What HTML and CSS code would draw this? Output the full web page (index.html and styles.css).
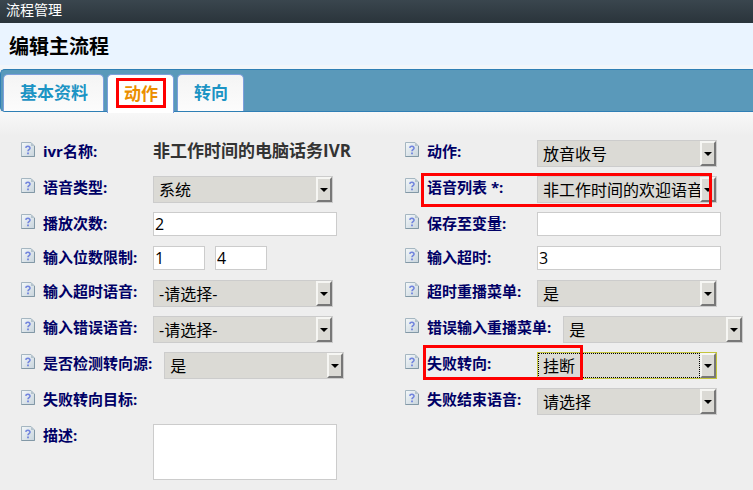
FILE: index.html
```html
<!DOCTYPE html>
<html lang="zh-CN">
<head>
  <meta charset="UTF-8" />
  <meta name="viewport" content="width=device-width, initial-scale=1.0"/>
  <title>流程管理</title>
  <link rel="stylesheet" href="styles.css">
</head>
<body>
  <svg class="defs" aria-hidden="true">
    <defs>
      <linearGradient id="paper" x1="0" y1="0" x2="1" y2="1">
        <stop offset="0" stop-color="#f4f8fa"/>
        <stop offset="1" stop-color="#c8d4dc"/>
      </linearGradient>
    </defs>
    <symbol id="help" viewBox="0 0 14 15">
      <path d="M.5.5H10L13.500 4V14.500H.5z" fill="url(#paper)" stroke="#a5b6c1"/>
      <path d="M13.500 4V14.500H.5" fill="none" stroke="#8298a6"/>
      <path d="M10 .5V4H13.500z" fill="#b4c3cd"/>
      <path d="M4.800 5.800C5 3.700 9.200 3.800 9 6.200C8.900 7.700 7 7.600 7 9.300" fill="none" stroke="#7184dd" stroke-width="1.600"/>
      <path d="M6.100 10.500H7.900V12.200H6.100z" fill="#7184dd"/>
    </symbol>
  </svg>

  <header class="topbar">流程管理</header>
  <h1 class="title">编辑主流程</h1>

  <nav class="tabs">
    <button type="button" class="tab">基本资料</button>
    <button type="button" class="tab active">动作<span class="mark mark-tab"></span></button>
    <button type="button" class="tab">转向</button>
  </nav>

  <form class="form">
    <div class="field">
      <svg class="help"><use href="#help"/></svg>
      <span class="label">ivr名称:</span>
      <strong class="value">非工作时间的电脑话务IVR</strong>
    </div>
    <div class="field">
      <svg class="help"><use href="#help"/></svg>
      <label class="label" for="action">动作:</label>
      <span class="select"><select id="action"><option>放音收号</option></select></span>
    </div>

    <div class="field">
      <svg class="help"><use href="#help"/></svg>
      <label class="label" for="voiceType">语音类型:</label>
      <span class="select"><select id="voiceType"><option>系统</option></select></span>
    </div>
    <div class="field">
      <svg class="help"><use href="#help"/></svg>
      <label class="label" for="voiceList">语音列表 *:</label>
      <span class="select"><select id="voiceList"><option>非工作时间的欢迎语音</option></select></span>
      <span class="mark mark-voice"></span>
    </div>

    <div class="field">
      <svg class="help"><use href="#help"/></svg>
      <label class="label" for="playTimes">播放次数:</label>
      <input type="text" id="playTimes" value="2">
    </div>
    <div class="field">
      <svg class="help"><use href="#help"/></svg>
      <label class="label" for="saveVar">保存至变量:</label>
      <input type="text" id="saveVar">
    </div>

    <div class="field">
      <svg class="help"><use href="#help"/></svg>
      <label class="label" for="minDigits">输入位数限制:</label>
      <input type="text" id="minDigits" class="short" value="1">
      <input type="text" class="short" aria-label="最大位数" value="4">
    </div>
    <div class="field">
      <svg class="help"><use href="#help"/></svg>
      <label class="label" for="timeout">输入超时:</label>
      <input type="text" id="timeout" value="3">
    </div>

    <div class="field">
      <svg class="help"><use href="#help"/></svg>
      <label class="label" for="timeoutVoice">输入超时语音:</label>
      <span class="select"><select id="timeoutVoice"><option>-请选择-</option></select></span>
    </div>
    <div class="field">
      <svg class="help"><use href="#help"/></svg>
      <label class="label" for="timeoutReplay">超时重播菜单:</label>
      <span class="select"><select id="timeoutReplay"><option>是</option></select></span>
    </div>

    <div class="field">
      <svg class="help"><use href="#help"/></svg>
      <label class="label" for="errorVoice">输入错误语音:</label>
      <span class="select"><select id="errorVoice"><option>-请选择-</option></select></span>
    </div>
    <div class="field">
      <svg class="help"><use href="#help"/></svg>
      <label class="label" for="errorReplay">错误输入重播菜单:</label>
      <span class="select"><select id="errorReplay"><option>是</option></select></span>
    </div>

    <div class="field">
      <svg class="help"><use href="#help"/></svg>
      <label class="label" for="checkSource">是否检测转向源:</label>
      <span class="select"><select id="checkSource"><option>是</option></select></span>
    </div>
    <div class="field">
      <svg class="help"><use href="#help"/></svg>
      <label class="label" for="failTo">失败转向:</label>
      <span class="select focused"><select id="failTo"><option>挂断</option></select></span>
      <span class="mark mark-fail"></span>
    </div>

    <div class="field">
      <svg class="help"><use href="#help"/></svg>
      <span class="label">失败转向目标:</span>
    </div>
    <div class="field">
      <svg class="help"><use href="#help"/></svg>
      <label class="label" for="failVoice">失败结束语音:</label>
      <span class="select"><select id="failVoice"><option>请选择</option></select></span>
    </div>

    <div class="field">
      <svg class="help"><use href="#help"/></svg>
      <label class="label" for="remark">描述:</label>
      <textarea id="remark"></textarea>
    </div>
  </form>
</body>
</html>
```
FILE: styles.css
```css
*,
*::before,
*::after {
  box-sizing: border-box;
}

body {
  margin: 0;
  background: #eee;
  font-family: "Open Sans", "Noto Sans CJK SC", sans-serif;
}

.defs {
  position: absolute;
  width: 0;
  height: 0;
}

.topbar {
  height: 23px;
  padding-left: 6px;
  background: linear-gradient(#3a464e, #2a343b);
  color: #fff;
  font-size: 14px;
  line-height: 20px;
}

.title {
  height: 42px;
  margin: 0 0 4px;
  padding-left: 9px;
  background: #eaf4ff;
  color: #000;
  font-size: 20px;
  line-height: 48px;
  box-shadow: 0 4px #f2f6fa;
}

.tabs {
  display: flex;
  gap: 3px;
  height: 43px;
  padding: 4px 2px 0;
  background: #5a99ba;
  border: 1px solid #2f7fb5;
  border-right: none;
  border-radius: 5px 0 0 5px;
}

.tab {
  position: relative;
  height: 37px;
  padding: 0 15px 0 16px;
  background: linear-gradient(#f4f4f4, #fcfcfc);
  border: 1px solid #7d9fdc;
  border-bottom: none;
  border-radius: 5px 5px 0 0;
  color: #1c94c4;
  font-family: inherit;
  font-size: 17px;
  font-weight: bold;
  line-height: 36px;
  cursor: pointer;
}

.tab.active {
  height: 39px;
  background: #fff;
  color: #eb8f00;
}

.form {
  display: grid;
  grid-template-columns: 51% 49%;
  row-gap: 9px;
  padding: 28px 0 10px;
  background: linear-gradient(#f8f8f8, #eee 24px);
}

.field {
  position: relative;
  display: flex;
  align-items: flex-start;
  padding-left: 21px;
}

.help {
  flex: none;
  width: 14px;
  height: 15px;
  margin: 2px 8px 0 0;
}

.label {
  flex: none;
  min-width: 110px;
  padding-right: 12px;
  color: #006;
  font-size: 15px;
  font-weight: bold;
  line-height: 22px;
  white-space: nowrap;
}

.value {
  color: #333;
  font-size: 17px;
  line-height: 22px;
  white-space: nowrap;
}

input,
textarea {
  width: 184px;
  height: 24px;
  padding: 0 1px;
  background: #fff;
  border: 1px solid #ccc;
  color: #000;
  font-family: inherit;
  font-size: 16px;
  outline: none;
}

input {
  margin: 0 0 1px;
}

input.short {
  width: 52px;
  margin-right: 10px;
}

textarea {
  height: 56px;
  resize: none;
}

.select {
  position: relative;
  flex: none;
  width: 180px;
  height: 27px;
}

.select select {
  display: block;
  width: 100%;
  height: 100%;
  padding: 0 16px 0 5px;
  appearance: none;
  background: #dbdad5;
  border: 1px solid #ccc;
  border-radius: 0;
  color: #000;
  font-family: inherit;
  font-size: 16px;
  outline: none;
}

/* raised drop-down button */
.select::before {
  content: "";
  position: absolute;
  top: 1px;
  right: 1px;
  width: 16px;
  height: 25px;
  background: #dbdad5;
  border: 2px solid;
  border-color: #f6f6f3 #777 #777 #f6f6f3;
  pointer-events: none;
}

.select::after {
  content: "";
  position: absolute;
  top: 12px;
  right: 5px;
  border: 4px solid transparent;
  border-top-color: #000;
  border-bottom: none;
  pointer-events: none;
}

.select.focused select {
  border-color: #c4c43c;
  background:
    repeating-linear-gradient(90deg, #000 0 1px, transparent 1px 2px) 1px 0 / 162px 1px no-repeat,
    repeating-linear-gradient(90deg, #000 0 1px, transparent 1px 2px) 1px 24px / 162px 1px no-repeat,
    repeating-linear-gradient(#000 0 1px, transparent 1px 2px) 0 0 / 1px 25px no-repeat,
    repeating-linear-gradient(#000 0 1px, transparent 1px 2px) 161px 0 / 1px 25px no-repeat,
    #dbdad5;
}

/* red highlight frames */
.mark {
  position: absolute;
  border: 3px solid #f00;
  pointer-events: none;
}

.mark-tab {
  top: 3px;
  left: 8px;
  width: 50px;
  height: 30px;
}

.mark-voice {
  top: -3px;
  left: 37px;
  width: 291px;
  height: 34px;
}

.mark-fail {
  top: -7px;
  left: 39px;
  width: 160px;
  height: 35px;
}
```
